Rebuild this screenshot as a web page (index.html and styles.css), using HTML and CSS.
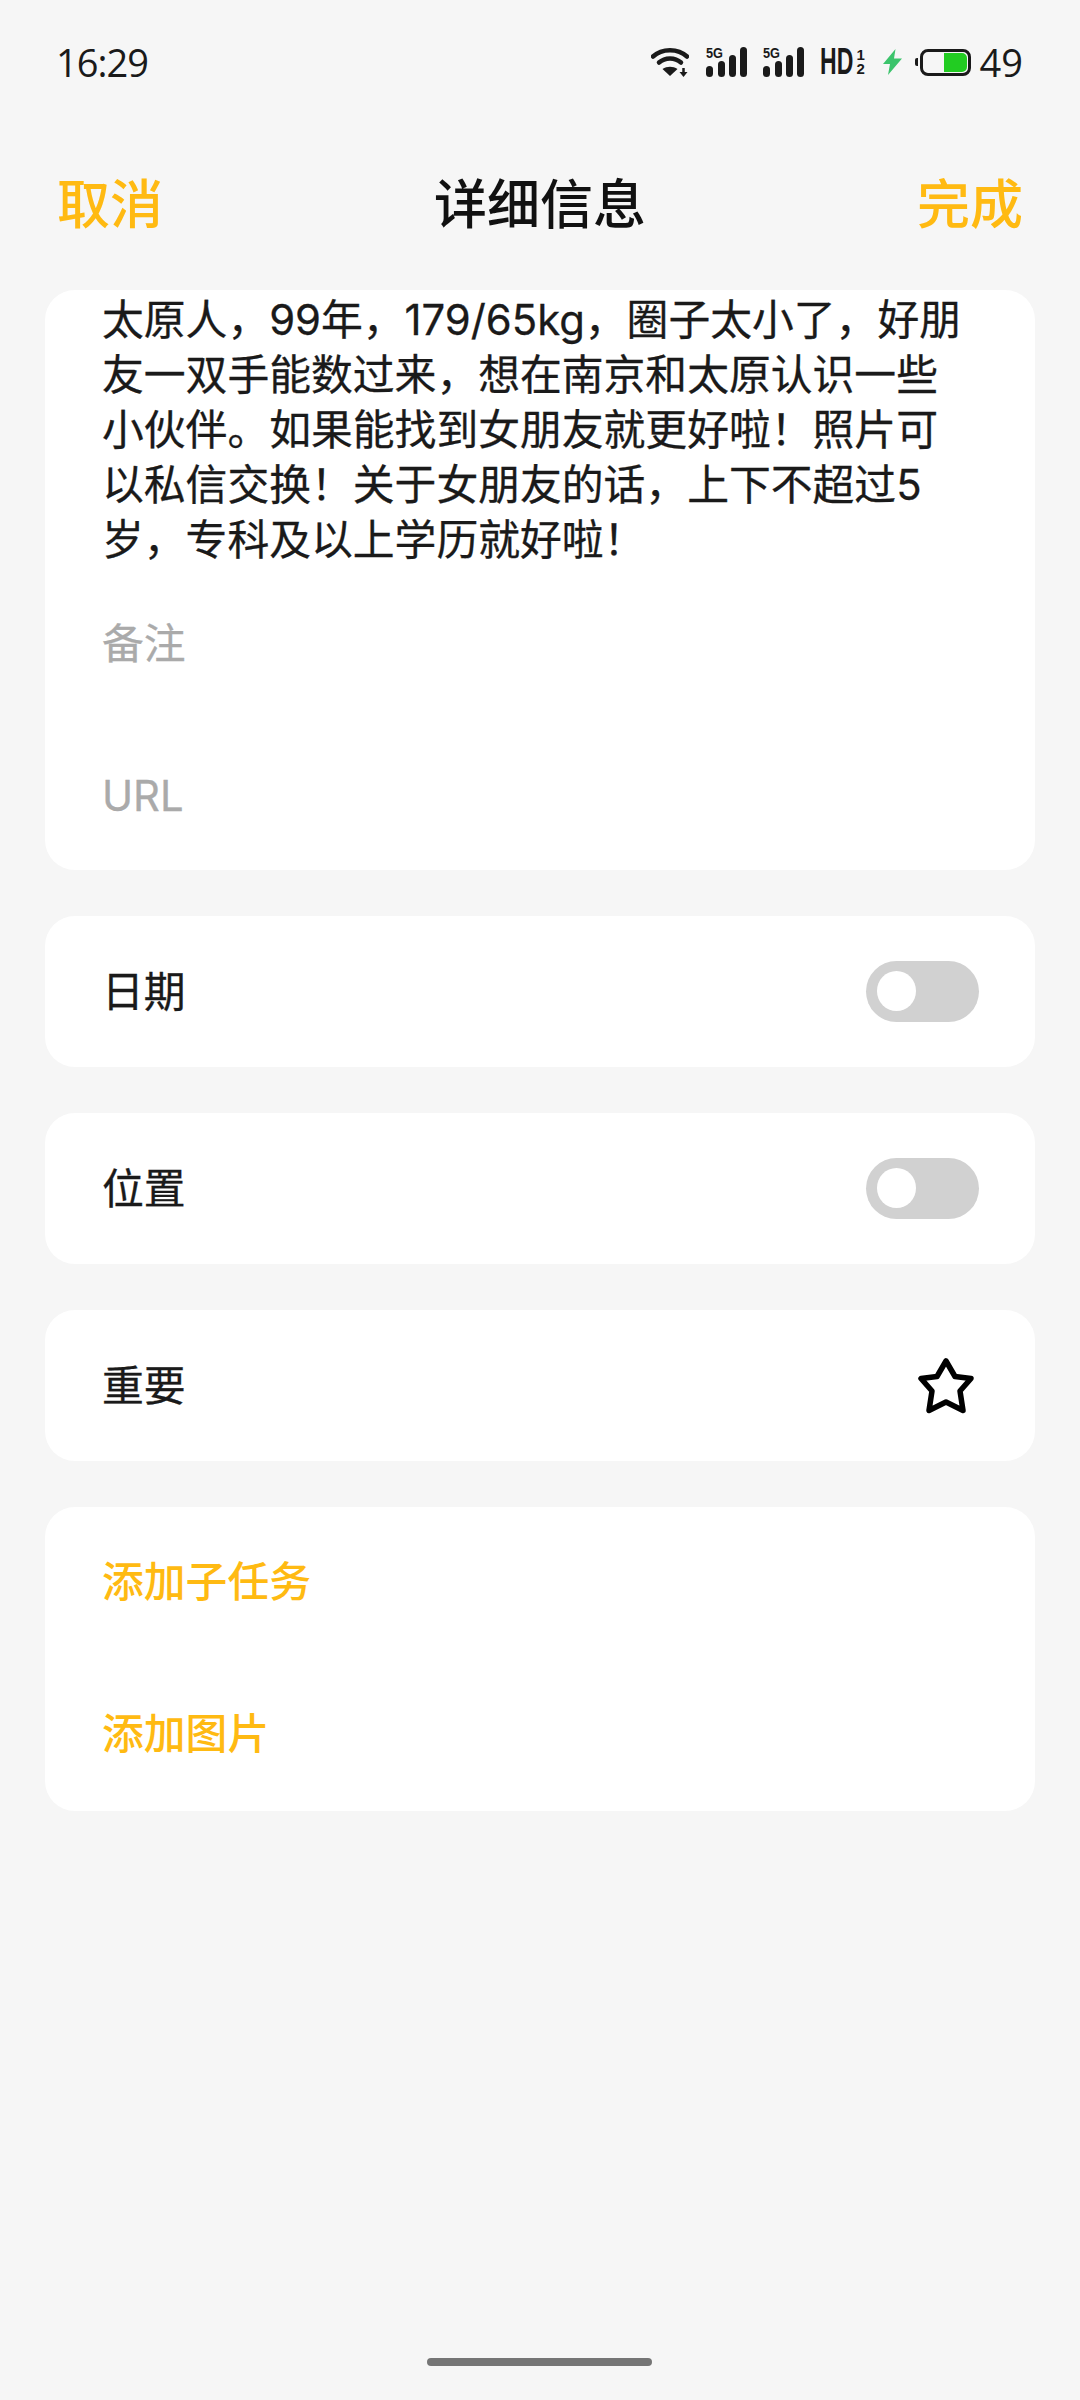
FILE: index.html
```html
<!DOCTYPE html>
<html lang="zh-CN">
<head>
  <meta charset="UTF-8" />
  <meta name="viewport" content="width=device-width, initial-scale=1" />
  <title>详细信息</title>
  <link rel="stylesheet" href="styles.css">
</head>
<body>

  <div class="status-bar">
    <span class="clock">16:29</span>
    <div class="status-icons">
      <svg class="icon-wifi" width="38" height="30" viewBox="0 0 38 30">
        <path d="M2 9.500C11 1 27 1 36 9.500" fill="none" stroke="#1a1a1a" stroke-width="4.500" stroke-linecap="round"/>
        <path d="M8 15.500C14 10 24 10 30 15.500" fill="none" stroke="#1a1a1a" stroke-width="4.500" stroke-linecap="round"/>
        <path d="M11.500 22L19 29L26.500 22C22 19 16 19 11.500 22Z" fill="#1a1a1a"/>
        <path d="M32.500 21V25" stroke="#1a1a1a" stroke-width="2.500"/>
        <path d="M28.500 25H36.500L32.500 30Z" fill="#1a1a1a"/>
      </svg>
      <div class="signal">
        <span class="signal-label">5G</span>
        <svg width="41" height="30" viewBox="0 0 41 30">
          <rect x="0" y="19" width="7" height="11" rx="3.500" fill="#1a1a1a"/>
          <rect x="12" y="14" width="7" height="16" rx="3.500" fill="#1a1a1a"/>
          <rect x="23" y="8" width="7" height="22" rx="3.500" fill="#1a1a1a"/>
          <rect x="34" y="0" width="7" height="30" rx="3.500" fill="#1a1a1a"/>
        </svg>
      </div>
      <div class="signal">
        <span class="signal-label">5G</span>
        <svg width="41" height="30" viewBox="0 0 41 30">
          <rect x="0" y="19" width="7" height="11" rx="3.500" fill="#1a1a1a"/>
          <rect x="12" y="14" width="7" height="16" rx="3.500" fill="#1a1a1a"/>
          <rect x="23" y="8" width="7" height="22" rx="3.500" fill="#1a1a1a"/>
          <rect x="34" y="0" width="7" height="30" rx="3.500" fill="#1a1a1a"/>
        </svg>
      </div>
      <div class="hd">
        <span class="hd-text">HD</span>
        <span class="hd-sims"><span>1</span><span>2</span></span>
      </div>
      <svg class="icon-bolt" width="19" height="26" viewBox="0 0 19 26">
        <path d="M12.500 0L0 15H7L5 26L19 9.500H11Z" fill="#3cc46c"/>
      </svg>
      <div class="battery">
        <span class="battery-nub"></span>
        <div class="battery-body"><span class="battery-fill"></span></div>
      </div>
      <span class="battery-num">49</span>
    </div>
  </div>

  <header class="title-bar">
    <span class="action">取消</span>
    <h1>详细信息</h1>
    <span class="action">完成</span>
  </header>

  <main class="content">
    <section class="card card-note">
      <p class="note-text">太原人，99年，179/65kg，圈子太小了，好朋<br>友一双手能数过来，想在南京和太原认识一些<br>小伙伴。如果能找到女朋友就更好啦！照片可<br>以私信交换！关于女朋友的话，上下不超过5<br>岁，专科及以上学历就好啦！</p>
      <div class="field">备注</div>
      <div class="field">URL</div>
    </section>

    <section class="card row">
      <span class="row-label">日期</span>
      <span class="switch"></span>
    </section>

    <section class="card row">
      <span class="row-label">位置</span>
      <span class="switch"></span>
    </section>

    <section class="card row">
      <span class="row-label">重要</span>
      <svg class="star" width="60" height="60" viewBox="0 0 60 60">
        <path d="M30 5L39 20.500L55 22.500L44 35L47 54.500L30 46L13 54.500L16 35L5 22.500L21 20.500Z" fill="none" stroke="#000" stroke-width="5.500" stroke-linejoin="round"/>
      </svg>
    </section>

    <section class="card card-links">
      <div class="link">添加子任务</div>
      <div class="link">添加图片</div>
    </section>
  </main>

  <div class="home-bar"></div>

</body>
</html>
```

FILE: styles.css
```css
body {
  margin: 0;
  height: 2400px;
  background: #f6f6f6;
  color: #1a1a1a;
  font-family: "Inter", "Noto Sans CJK SC", sans-serif;
  display: flex;
  flex-direction: column;
  overflow: hidden;
}
.status-bar {
  height: 64px;
  padding: 30px 57px 0 56px;
  display: flex;
  align-items: center;
  justify-content: space-between;
}
.clock {
  font-family: "Open Sans", sans-serif;
  font-size: 38px;
  letter-spacing: -1px;
}
.status-icons {
  display: flex;
  align-items: center;
}
.icon-wifi {
  margin-right: 17px;
}
.signal {
  position: relative;
  width: 41px;
  height: 30px;
  margin-right: 16px;
  display: flex;
}
.signal-label {
  position: absolute;
  left: 0;
  top: -1px;
  font-family: "Liberation Sans", sans-serif;
  font-size: 15px;
  font-weight: 700;
  line-height: 13px;
  transform: scaleX(0.85);
  transform-origin: left center;
}
.hd {
  display: flex;
  align-items: center;
  margin-right: 18px;
}
.hd-text {
  width: 37px;
  font-family: "Liberation Sans", sans-serif;
  font-size: 36px;
  font-weight: 700;
  line-height: 30px;
  transform: scaleX(0.64);
  transform-origin: left center;
}
.hd-sims {
  width: 8px;
  display: flex;
  flex-direction: column;
  font-family: "Liberation Sans", sans-serif;
  font-size: 15px;
  font-weight: 700;
  line-height: 14px;
}
.icon-bolt {
  margin-right: 13px;
}
.battery {
  display: flex;
  align-items: center;
  margin-right: 9px;
}
.battery-nub {
  width: 3px;
  height: 8px;
  background: #1a1a1a;
  border-radius: 2px 0 0 2px;
  margin-right: 2px;
}
.battery-body {
  box-sizing: border-box;
  width: 51px;
  height: 27px;
  border: 3px solid #1a1a1a;
  border-radius: 8px;
  padding: 1px;
  display: flex;
  justify-content: flex-end;
}
.battery-fill {
  width: 23px;
  background: #22cc22;
  border-radius: 0 5px 5px 0;
}
.battery-num {
  font-family: "Open Sans", sans-serif;
  font-size: 38px;
}
.title-bar {
  margin-top: 77px;
  height: 60px;
  padding: 0 57px;
  display: flex;
  align-items: center;
  justify-content: space-between;
}
.title-bar h1 {
  margin: 0;
  font-size: 53px;
  font-weight: 500;
  color: #111;
}
.action {
  font-size: 53px;
  font-weight: 500;
  color: #ffba12;
}
.content {
  margin-top: 59px;
  padding: 0 45px;
  display: flex;
  flex-direction: column;
  gap: 46px;
}
.card {
  background: #fff;
  border-radius: 30px;
  font-size: 41.800px;
  -webkit-text-stroke: 0.3px;
}
.row {
  height: 151px;
  padding: 0 56px 0 57px;
  display: flex;
  align-items: center;
  justify-content: space-between;
}
.row-label {
  margin-bottom: 5px;
}
.card-note {
  padding: 3px 57px 0;
  height: 580px;
  box-sizing: border-box;
}
.note-text {
  margin: 0;
  line-height: 55px;
  white-space: nowrap;
}
.field {
  height: 152px;
  line-height: 152px;
  color: #aaa;
}
.switch {
  position: relative;
  width: 113px;
  height: 61px;
  border-radius: 31px;
  background: #d1d1d1;
}
.switch::after {
  content: "";
  position: absolute;
  left: 11px;
  top: 10px;
  width: 39px;
  height: 40px;
  border-radius: 50%;
  background: #fff;
}
.star {
  margin-right: 3px;
}
.card-links {
  height: 304px;
  padding: 0 57px;
}
.link {
  height: 152px;
  line-height: 150px;
  color: #ffba12;
  font-weight: 500;
  -webkit-text-stroke: 0;
}
.home-bar {
  position: absolute;
  left: 427px;
  top: 2358px;
  width: 225px;
  height: 8px;
  border-radius: 4px;
  background: #757575;
}
```
